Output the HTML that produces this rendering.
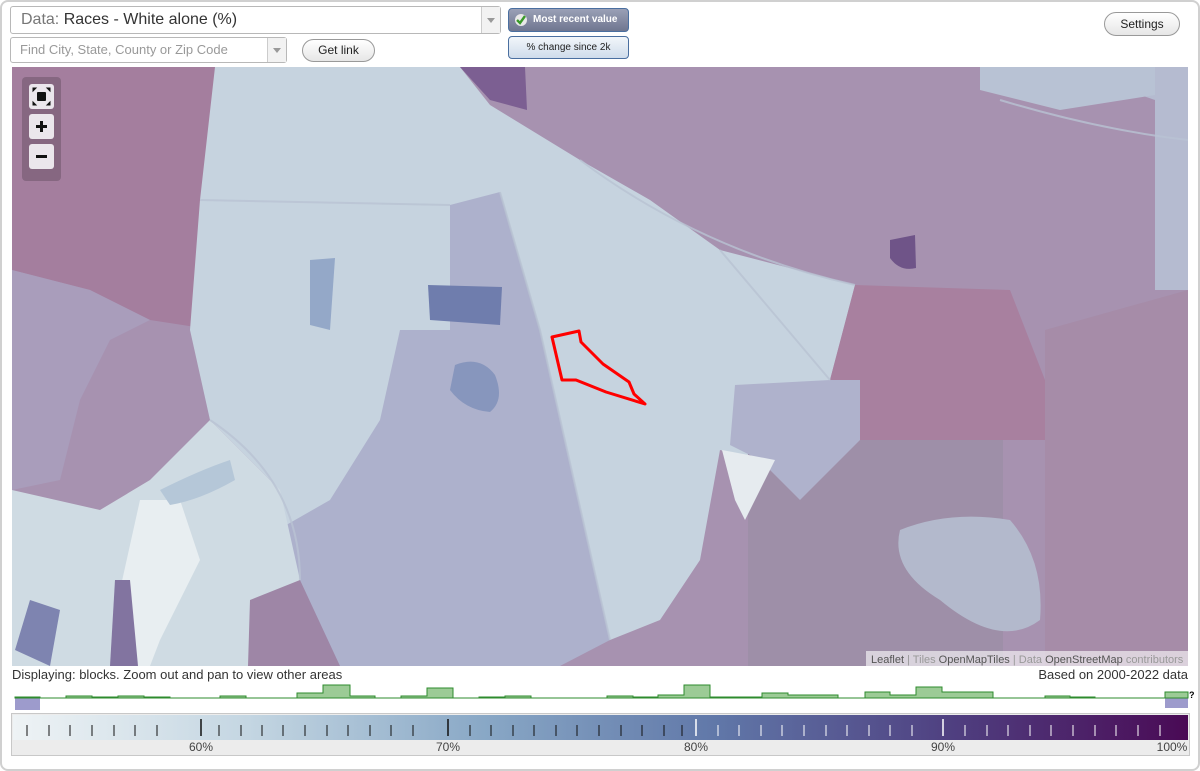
<!DOCTYPE html>
<html><head><meta charset="utf-8"><style>
body{margin:0;width:1200px;height:771px;background:#fff;font-family:"Liberation Sans",Arial,sans-serif;position:relative;overflow:hidden}
.frame{position:absolute;left:0;top:0;width:1196px;height:767px;border:2px solid #d0d0d0;border-radius:8px;}
.sel{position:absolute;background:#fff;border:1px solid #b8b8b8;border-radius:3px;box-sizing:border-box}
.arr{position:absolute;right:0;top:0;bottom:0;width:18px;border-left:1px solid #ccc;background:#f2f2f2}
.arr:after{content:"";position:absolute;left:5px;top:50%;margin-top:-2px;border:4px solid transparent;border-top:5px solid #999}
.btn{position:absolute;border:1px solid #999;border-radius:12px;background:linear-gradient(#fff,#e6e6e6);font-size:12px;text-align:center;box-sizing:border-box}
</style></head><body>
<div class="frame"></div>
<div class="sel" style="left:10px;top:6px;width:491px;height:28px;font-size:16px;line-height:26px;padding-left:10px;color:#333"><span style="color:#777">Data:</span> Races - White alone (%)<div class="arr"></div></div>
<div class="sel" style="left:10px;top:37px;width:277px;height:26px;font-size:13px;line-height:24px;padding-left:9px;color:#999">Find City, State, County or Zip Code<div class="arr"></div></div>
<div class="btn" style="left:302px;top:39px;width:73px;height:23px;line-height:21px;color:#222">Get link</div>
<div style="position:absolute;left:508px;top:8px;width:121px;height:24px;box-sizing:border-box;border:1px solid #4a6fa0;border-radius:4px;background:linear-gradient(#9aa0b6,#6f7690);color:#fff;font-size:10px;font-weight:bold;line-height:22px;padding-left:24px">Most recent value
<svg style="position:absolute;left:5px;top:4px" width="14" height="14" viewBox="0 0 14 14"><circle cx="7" cy="7" r="6" fill="#e8e8e8"/><path d="M3 7l3 3 5-7" stroke="#3a9a2a" stroke-width="2.4" fill="none"/></svg></div>
<div style="position:absolute;left:508px;top:36px;width:121px;height:23px;box-sizing:border-box;border:1px solid #4a6fa0;border-radius:4px;background:linear-gradient(#f2f6fa,#cfdceb);color:#222;font-size:10px;line-height:21px;text-align:center">% change since 2k</div>
<div class="btn" style="left:1104px;top:12px;width:76px;height:24px;line-height:22px;color:#222">Settings</div>

<svg style="position:absolute;left:12px;top:67px" width="1176" height="599" viewBox="12 67 1176 599">
<rect x="12" y="67" width="1176" height="599" fill="#a792b0"/>
<polygon points="12,67 215,67 222,195 215,330 150,320 90,290 12,270" fill="#a47e9e"/>
<polygon points="12,270 90,290 150,320 110,340 80,400 60,480 12,490" fill="#a99dbb"/>
<polygon points="215,67 460,67 490,105 580,160 650,200 720,250 855,285 830,380 860,380 860,440 800,500 760,460 720,450 700,560 660,620 610,640 380,640 300,580 270,480 210,420 190,330 200,200" fill="#c6d3df"/>
<polygon points="450,205 500,192 540,330 610,640 560,666 300,666 250,600 260,540 330,500 380,420 400,330 450,330" fill="#adb1cc"/>
<polygon points="12,490 100,510 150,480 210,420 280,490 300,580 250,666 12,666" fill="#cfdbe3"/>
<polygon points="140,500 180,500 200,560 160,640 150,666 130,666 120,590" fill="#e8eef1"/>
<polygon points="115,580 130,580 138,666 110,666" fill="#8274a0"/>
<polygon points="30,600 60,610 50,666 15,650" fill="#7e84b0"/>
<polygon points="250,600 300,580 340,666 248,666" fill="#9e86a6"/>
<polygon points="1060,67 1188,67 1188,290 1155,290 1155,100" fill="#b5bbd0"/>
<polygon points="980,67 1155,67 1155,95 1060,110 980,90" fill="#b8c2d4"/>
<polygon points="855,285 1010,290 1045,380 1045,440 830,440 830,380" fill="#a8809f"/>
<polygon points="1045,330 1188,290 1188,666 1045,666" fill="#a68ca8"/>
<polygon points="748,440 1003,440 1003,666 748,666" fill="#9e8fa8"/>
<path d="M900 530 Q950 510 1010 520 Q1045 560 1040 620 Q1000 650 940 600 Q890 570 900 530Z" fill="#b3b9cc"/>
<polygon points="735,385 830,380 860,380 860,440 800,500 760,460 730,445" fill="#afb2cc"/>
<polygon points="722,450 775,460 745,520 735,500" fill="#e6ebef"/>
<polygon points="428,285 502,287 500,325 430,320" fill="#6f7dad"/>
<path d="M455 365 Q480 355 495 375 Q505 400 490 412 Q465 410 450 390Z" fill="#8796bd"/>
<path d="M890 240 L915 235 L916 268 Q900 272 890 258Z" fill="#6f5488"/>
<polygon points="460,67 525,67 527,110 490,100" fill="#7c5f92"/>
<path d="M310 260 L335 258 L330 330 L310 325Z" fill="#94a8c8"/>
<path d="M160 490 Q200 470 230 460 L235 480 Q200 500 170 505Z" fill="#b5c7d8"/>
<g fill="none" stroke="#b9c3d3" stroke-width="2" opacity=".8">
<path d="M500 192 L540 330 L610 640"/><path d="M580 160 Q700 250 855 285"/><path d="M200 200 L450 205"/><path d="M210 420 Q300 480 300 580"/>
<path d="M1188 140 Q1100 130 1000 100"/><path d="M720 250 L830 380"/>
</g>
<polygon points="552,337 579,331 581,342 603,364 629,382 634,394 645,404 606,392 576,380 562,380" fill="none" stroke="#f00" stroke-width="3" stroke-linejoin="round"/>
<rect x="22" y="77" width="39" height="104" rx="4" fill="#000" opacity=".18"/>
<rect x="29" y="84" width="25" height="25" rx="3" fill="#ebe6ec"/><rect x="37" y="92" width="9" height="9" rx="1" fill="#111"/>
<path d="M33 88l3 0-3 3zM50 88l-3 0 3 3zM33 105l3 0-3-3zM50 105l-3 0 3-3z" fill="#111" stroke="#111"/>
<rect x="29" y="114" width="25" height="25" rx="3" fill="#ebe6ec"/><path d="M36 126.5h11M41.5 121v11" stroke="#111" stroke-width="3"/>
<rect x="29" y="144" width="25" height="25" rx="3" fill="#ebe6ec"/><path d="M36 156.5h11" stroke="#111" stroke-width="3"/>
<rect x="866" y="651" width="322" height="15" fill="#fff" opacity=".6"/>
<text x="871" y="663" font-size="11" fill="#555" font-family="Liberation Sans">Leaflet <tspan fill="#999">| Tiles</tspan> OpenMapTiles <tspan fill="#999">| Data</tspan> OpenStreetMap <tspan fill="#999">contributors</tspan></text>
</svg>

<div style="position:absolute;left:12px;top:667px;font-size:13px;color:#333">Displaying: blocks. Zoom out and pan to view other areas</div>
<div style="position:absolute;right:12px;top:667px;font-size:13px;color:#333">Based on 2000-2022 data</div>

<svg style="position:absolute;left:0;top:680px" width="1200" height="34" viewBox="0 680 1200 34">
<rect x="15" y="698" width="25" height="12" fill="#9d9bcc"/><rect x="1165" y="698" width="23" height="10" fill="#9d9bcc"/>
<polygon fill="#9ccb96" stroke="#2e8b2e" stroke-width="1" points="15,698 15,697 40,697 40,698 66,698 66,696 92,696 92,697 118,697 118,696 144,696 144,697 170,697 170,698 220,698 220,696 246,696 246,698 297,698 297,693 323,693 323,685 350,685 350,696 375,696 375,698 401,698 401,696 427,696 427,688 453,688 453,698 479,698 479,697 505,697 505,696 531,696 531,698 607,698 607,696 633,696 633,697 658,697 658,695 684,695 684,685 710,685 710,697 762,697 762,693 788,693 788,695 812,695 812,695 838,695 838,698 865,698 865,692 890,692 890,695 916,695 916,687 942,687 942,692 968,692 968,692 993,692 993,698 1045,698 1045,696 1070,696 1070,697 1095,697 1095,698 1165,698 1165,692 1188,692 1188,698"/>
<text x="1189" y="698" font-size="9" font-weight="bold" fill="#000">?</text>
</svg>

<svg style="position:absolute;left:11px;top:713px" width="1179" height="43" viewBox="11 713 1179 43">
<defs><linearGradient id="g" x1="0" x2="1"><stop offset="0" stop-color="#eef3f5"/><stop offset=".2" stop-color="#c4d6e2"/><stop offset=".4" stop-color="#89a8c6"/><stop offset=".6" stop-color="#6077a8"/><stop offset=".8" stop-color="#4f3f80"/><stop offset="1" stop-color="#4a0a55"/></linearGradient></defs>
<rect x="11.5" y="713.5" width="1178" height="42" fill="#ececec" stroke="#c8c8c8"/>
<rect x="13" y="715" width="1175" height="25" fill="url(#g)"/>
<path stroke-width="1" d="M27 725v11M49 725v11M70 725v11M92 725v11M114 725v11M135 725v11M157 725v11M219 725v11M241 725v11M262 725v11M283 725v11M305 725v11M327 725v11M348 725v11M370 725v11M391 725v11M413 725v11M470 725v11M491 725v11M513 725v11M534 725v11M556 725v11M577 725v11M599 725v11M621 725v11M642 725v11M664 725v11" stroke="#111"/>
<path stroke-width="1.5" d="M201 719v17M448 719v17" stroke="#111"/>
<path stroke-width="1" d="M682 725v11" stroke="#111"/>
<path stroke-width="1" d="M718 725v11M739 725v11M761 725v11M782 725v11M804 725v11M826 725v11M847 725v11M869 725v11M890 725v11M912 725v11M965 725v11M987 725v11M1008 725v11M1030 725v11M1051 725v11M1073 725v11M1095 725v11M1116 725v11M1138 725v11M1160 725v11" stroke="#fff"/>
<path stroke-width="1.5" d="M696 719v17M943 719v17" stroke="#fff"/>
<g font-size="12" fill="#444" font-family="Liberation Sans" text-anchor="middle"><text x="201" y="751">60%</text><text x="448" y="751">70%</text><text x="696" y="751">80%</text><text x="943" y="751">90%</text><text x="1172" y="751">100%</text></g>
</svg>
</body></html>
